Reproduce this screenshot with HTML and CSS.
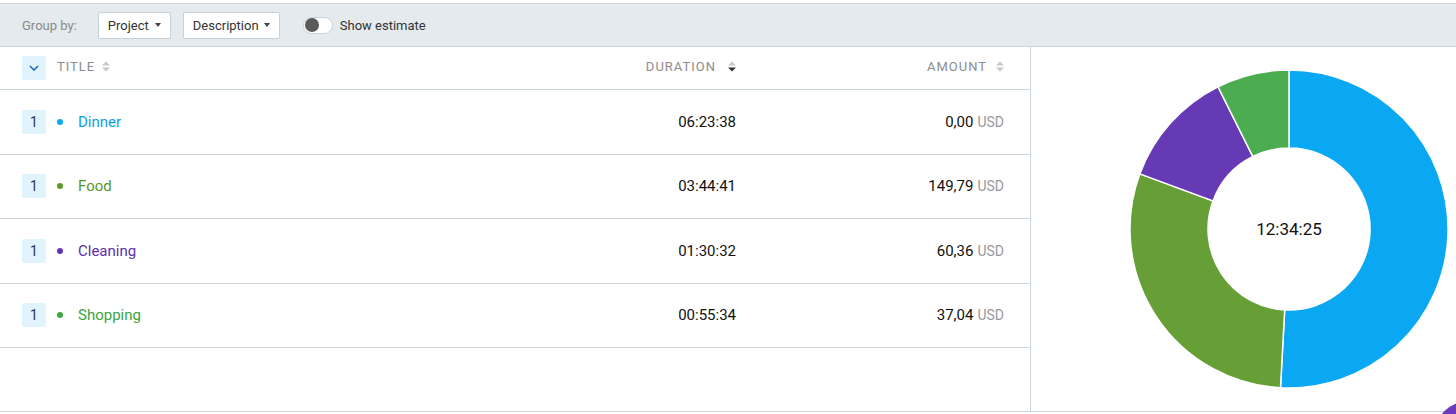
FILE: index.html
```html
<!DOCTYPE html>
<html>
<head>
<meta charset="utf-8">
<link rel="stylesheet" href="styles.css">
</head>
<body>
<div class="toolbar">
  <span class="group-label">Group by:</span>
  <div class="select select-project"><span>Project</span><span class="caret"></span></div>
  <div class="select select-desc"><span>Description</span><span class="caret"></span></div>
  <div class="toggle"><span class="knob"></span></div>
  <span class="toggle-label">Show estimate</span>
</div>
<div class="main">
  <div class="table">
    <div class="row head">
      <div class="cell title-cell">
        <span class="expand"><svg width="10" height="6" viewBox="0 0 10 6"><path d="M1 1 L5 5 L9 1" fill="none" stroke="#1565c0" stroke-width="1.5"/></svg></span>
        <span class="hlabel">TITLE</span>
        <span class="sort"><svg width="8" height="11" viewBox="0 0 8 11"><path d="M0 4.5 L4 0.5 L8 4.5 Z" fill="#c8c8c8"/><path d="M0 6.5 L4 10.5 L8 6.5 Z" fill="#c8c8c8"/></svg></span>
      </div>
      <div class="cell num-cell dur">
        <span class="hlabel">DURATION</span>
        <span class="sort"><svg width="8" height="11" viewBox="0 0 8 11"><path d="M0 4.5 L4 0.5 L8 4.5 Z" fill="#c8c8c8"/><path d="M0 6.5 L4 10.5 L8 6.5 Z" fill="#333"/></svg></span>
      </div>
      <div class="cell num-cell amt">
        <span class="hlabel">AMOUNT</span>
        <span class="sort"><svg width="8" height="11" viewBox="0 0 8 11"><path d="M0 4.5 L4 0.5 L8 4.5 Z" fill="#c8c8c8"/><path d="M0 6.5 L4 10.5 L8 6.5 Z" fill="#c8c8c8"/></svg></span>
      </div>
    </div>
    <div class="row item">
      <div class="cell title-cell"><span class="badge">1</span><span class="dot c-dinner-bg"></span><span class="name c-dinner">Dinner</span></div>
      <div class="cell num-cell dur">06:23:38</div>
      <div class="cell num-cell amt">0,00<span class="cur">USD</span></div>
    </div>
    <div class="row item">
      <div class="cell title-cell"><span class="badge">1</span><span class="dot c-food-bg"></span><span class="name c-food">Food</span></div>
      <div class="cell num-cell dur">03:44:41</div>
      <div class="cell num-cell amt">149,79<span class="cur">USD</span></div>
    </div>
    <div class="row item">
      <div class="cell title-cell"><span class="badge">1</span><span class="dot c-clean-bg"></span><span class="name c-clean">Cleaning</span></div>
      <div class="cell num-cell dur">01:30:32</div>
      <div class="cell num-cell amt">60,36<span class="cur">USD</span></div>
    </div>
    <div class="row item">
      <div class="cell title-cell"><span class="badge">1</span><span class="dot c-shop-bg"></span><span class="name c-shop">Shopping</span></div>
      <div class="cell num-cell dur">00:55:34</div>
      <div class="cell num-cell amt">37,04<span class="cur">USD</span></div>
    </div>
  </div>
  <div class="chart">
    <svg class="donut" width="320" height="320" viewBox="0 0 320 320">
      <path d="M160,1 A159,159 0 1 1 151.51,318.77 L155.67,240.88 A81,81 0 1 0 160,79 Z" fill="#0aa8f2" stroke="#fff" stroke-width="1.5"/>
      <path d="M151.51,318.77 A159,159 0 0 1 10.85,104.88 L84.02,131.92 A81,81 0 0 0 155.67,240.88 Z" fill="#659f35" stroke="#fff" stroke-width="1.5"/>
      <path d="M10.85,104.88 A159,159 0 0 1 89.01,17.73 L123.83,87.52 A81,81 0 0 0 84.02,131.92 Z" fill="#673ab5" stroke="#fff" stroke-width="1.5"/>
      <path d="M89.01,17.73 A159,159 0 0 1 160,1 L160,79 A81,81 0 0 0 123.83,87.52 Z" fill="#4cad50" stroke="#fff" stroke-width="1.5"/>
      <text x="160" y="166" text-anchor="middle" class="total">12:34:25</text>
    </svg>
  </div>
</div>
<div class="fab-clip"><div class="fab"></div></div>
</body>
</html>
```
FILE: styles.css
```css
* { box-sizing: border-box; }
html, body { margin: 0; padding: 0; background: #fff; overflow: hidden; }
body {
  font-family: Roboto, "Liberation Sans", Arial, sans-serif;
  color: #222;
  width: 1456px;
  height: 414px;
  padding-top: 3px;
  position: relative;
}
.toolbar {
  height: 44px;
  background: #e4eaee;
  border-top: 1px solid #c9d4db;
  border-bottom: 1px solid #c9d4db;
  display: flex;
  align-items: center;
  padding-left: 22px;
  font-size: 13px;
}
.group-label { color: #8a8a8a; margin-right: 21px; }
.select {
  height: 27px;
  background: #fff;
  border: 1px solid #c6d2d9;
  border-radius: 2px;
  display: flex;
  align-items: center;
  justify-content: space-between;
  padding: 0 9px 0 9px;
  color: #333;
  margin-right: 12px;
}
.select-project { width: 73px; }
.select-desc { width: 97px; margin-right: 23px; }
.caret {
  width: 0; height: 0;
  border-left: 3.5px solid transparent;
  border-right: 3.5px solid transparent;
  border-top: 4px solid #444;
}
.toggle {
  width: 30px;
  height: 17px;
  border: 1px solid #c6d2d9;
  border-radius: 9px;
  background: #fff;
  display: flex;
  align-items: center;
  padding-left: 1px;
  margin-right: 7px;
}
.knob {
  width: 14px; height: 14px;
  border-radius: 50%;
  background: #5a5a5a;
}
.toggle-label { color: #333; }
.main {
  display: flex;
  height: 365px;
  border-bottom: 1px solid #c9d4db;
}
.table {
  width: 1031px;
  border-right: 1px solid #c9d4db;
  flex: none;
}
.row {
  display: grid;
  grid-template-columns: 1fr 200px 268px;
  padding-right: 26px;
  border-bottom: 1px solid #c9d4db;
  align-items: center;
}
.row.head { height: 43px; padding-bottom: 3px; }
.row.item { height: 64.5px; font-size: 15px; }
.cell { display: flex; align-items: center; }
.title-cell { padding-left: 22px; }
.num-cell { justify-content: flex-end; }
.hlabel {
  font-size: 13px;
  letter-spacing: 1px;
  color: #8c8c8c;
}
.sort { display: inline-flex; margin-left: 9px; }
.title-cell .sort { margin-left: 7px; }
.head .dur .sort { margin-left: 12px; }
.head .title-cell .expand { margin-top: 3px; }
.expand, .badge {
  width: 24px; height: 24px;
  background: #e1f4fd;
  border-radius: 2px;
  display: inline-flex;
  align-items: center;
  justify-content: center;
  margin-right: 11px;
  flex: none;
}
.badge { font-size: 14px; color: #1e3a58; }
.dot {
  width: 6px; height: 6px; border-radius: 50%;
  margin: 0 15px 0 0;
  flex: none;
}
.c-dinner { color: #0b9ee8; }
.c-dinner-bg { background: #0aa8f2; }
.c-food { color: #5a971f; }
.c-food-bg { background: #5e9a26; }
.c-clean { color: #5b2fb0; }
.c-clean-bg { background: #6036b4; }
.c-shop { color: #3ca33f; }
.c-shop-bg { background: #3ea843; }
.dur, .amt { color: #111; }
.cur { color: #999; margin-left: 4px; font-size: 14px; }
.chart {
  flex: 1;
  display: flex;
  align-items: center;
  padding-left: 98px;
  padding-bottom: 1px;
}
.donut { display: block; }
.total { font-family: Roboto, "Liberation Sans", Arial, sans-serif; font-size: 17px; fill: #111; }
.fab-clip {
  position: absolute;
  left: 1436px;
  top: 402px;
  width: 20px;
  height: 12px;
  overflow: hidden;
}
.fab {
  width: 60px;
  height: 60px;
  border-radius: 50%;
  background: #6a3bba;
}
```
